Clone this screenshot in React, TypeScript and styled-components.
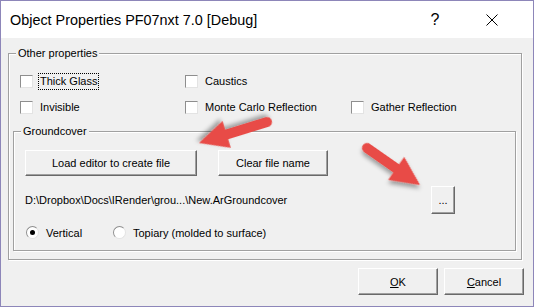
import * as React from "react";
import styled, { createGlobalStyle } from "styled-components";

const GlobalStyle = createGlobalStyle`
  html, body {
    margin: 0;
    padding: 0;
    background: #ffffff;
  }
  body {
    font-family: "Liberation Sans", Arial, sans-serif;
    font-size: 11px;
    color: #000;
  }
`;

const colors = {
  frame: "#8d86b9",
  face: "#f0f0f0",
  edgeDark: "#a0a0a0",
  edgeDarker: "#696969",
  arrow: "#e84c47",
};

const Window = styled.div`
  position: relative;
  width: 534px;
  height: 307px;
  box-sizing: border-box;
  border: 1px solid ${colors.frame};
  background: ${colors.face};
  display: flex;
  flex-direction: column;
`;

const TitleBar = styled.div`
  height: 37px;
  background: #fff;
  display: flex;
  align-items: center;
  padding-left: 9px;
`;

const Title = styled.div`
  font-family: "Liberation Sans", Arial, sans-serif;
  font-size: 14.4px;
  color: #000;
  white-space: nowrap;
`;

const CaptionButtons = styled.div`
  margin-left: auto;
  display: flex;
  align-items: center;
  gap: 27px;
  padding-right: 26px;
`;

const CaptionButton = styled.div`
  width: 30px;
  height: 30px;
  display: flex;
  align-items: center;
  justify-content: center;
  font-family: "Liberation Sans", Arial, sans-serif;
  font-size: 16px;
  color: #000;
`;

const Body = styled.div`
  flex: 1;
  display: flex;
  flex-direction: column;
  padding: 15px 11px 0 7px;
`;

const Group = styled.div<{ $gapTop?: number }>`
  position: relative;
  margin-top: ${(p) => p.$gapTop ?? 0}px;
  border: 1px solid ${colors.edgeDark};
  box-shadow: inset 1px 1px 0 #fff, 1px 1px 0 #fff;
  display: flex;
  flex-direction: column;
`;

const Legend = styled.span`
  position: absolute;
  top: -7px;
  left: 7px;
  padding: 0 2px;
  background: ${colors.face};
  line-height: 13px;
`;

const OuterContent = styled.div`
  padding: 19px 5px 8px 4px;
  display: flex;
  flex-direction: column;
`;

const CheckGrid = styled.div`
  display: grid;
  grid-template-columns: 165px 166px auto;
  row-gap: 10px;
  padding-left: 7px;
`;

const CheckItem = styled.label`
  display: flex;
  align-items: center;
  height: 16px;
  gap: 6px;
`;

const CheckBox = styled.span`
  width: 13px;
  height: 13px;
  box-sizing: border-box;
  background: #fff;
  border: 1px solid;
  border-color: #8e8e8e #e3e3e3 #e3e3e3 #8e8e8e;
`;

const CheckText = styled.span<{ $focused?: boolean }>`
  padding: 1px 1px;
  line-height: 13px;
  outline: ${(p) => (p.$focused ? "1px dotted #000" : "none")};
  outline-offset: 0;
`;

const InnerContent = styled.div`
  padding: 18px 0 11px 11px;
  display: flex;
  flex-direction: column;
`;

const ButtonRow = styled.div`
  display: flex;
  gap: 21px;
`;

const Button = styled.button<{ $w: number; $h?: number }>`
  width: ${(p) => p.$w}px;
  height: ${(p) => p.$h ?? 26}px;
  box-sizing: border-box;
  margin: 0;
  padding: 0;
  font-family: "Liberation Sans", Arial, sans-serif;
  font-size: 11px;
  color: #000;
  background: ${colors.face};
  border: 1px solid;
  border-color: #fff ${colors.edgeDarker} ${colors.edgeDarker} #fff;
  box-shadow: inset -1px -1px 0 ${colors.edgeDark};
`;

const PathRow = styled.div`
  display: flex;
  align-items: center;
  margin-top: 10px;
`;

const PathText = styled.div`
  width: 406px;
  white-space: nowrap;
`;

const RadioRow = styled.div`
  display: flex;
  align-items: center;
  margin-top: 12px;
  padding-left: 1px;
`;

const RadioItem = styled.label`
  display: flex;
  align-items: center;
  gap: 7px;
  width: 87px;
  &:last-child {
    width: auto;
  }
`;

const Radio = styled.span<{ $checked?: boolean }>`
  width: 13px;
  height: 13px;
  box-sizing: border-box;
  border-radius: 50%;
  background: #fff;
  border: 1px solid;
  border-color: #8e8e8e #e3e3e3 #e3e3e3 #8e8e8e;
  display: flex;
  align-items: center;
  justify-content: center;
  &::after {
    content: "";
    width: 5px;
    height: 5px;
    border-radius: 50%;
    background: ${(p) => (p.$checked ? "#000" : "transparent")};
  }
`;

const Footer = styled.div`
  display: flex;
  justify-content: flex-end;
  gap: 6px;
  padding: 8px 0 0 0;
  margin-right: -2px;
`;

const Overlay = styled.svg`
  position: absolute;
  left: 0;
  top: 0;
  pointer-events: none;
`;

const Arrow = ({ x1, y1, x2, y2 }: { x1: number; y1: number; x2: number; y2: number }) => {
  const dx = x2 - x1;
  const dy = y2 - y1;
  const len = Math.sqrt(dx * dx + dy * dy);
  const angle = (Math.atan2(dy, dx) * 180) / Math.PI;
  return (
    <g transform={`translate(${x1} ${y1}) rotate(${angle})`} filter="url(#shadow)">
      <line x1={0} y1={0} x2={len - 26} y2={0} stroke={colors.arrow} strokeWidth={10} strokeLinecap="round" />
      <polygon points={`${len},0 ${len - 29},-14 ${len - 29},14`} fill={colors.arrow} />
    </g>
  );
};

const AccessKey = styled.span`
  text-decoration: underline;
`;

export default function App() {
  return (
    <>
      <GlobalStyle />
      <Window>
        <TitleBar>
          <Title>Object Properties PF07nxt 7.0 [Debug]</Title>
          <CaptionButtons>
            <CaptionButton>?</CaptionButton>
            <CaptionButton>
              <svg width="12" height="12" viewBox="0 0 12 12">
                <path d="M0.5 0.5 L11.5 11.5 M11.5 0.5 L0.5 11.5" stroke="#000" strokeWidth="1" />
              </svg>
            </CaptionButton>
          </CaptionButtons>
        </TitleBar>
        <Body>
          <Group>
            <Legend>Other properties</Legend>
            <OuterContent>
              <CheckGrid>
                <CheckItem>
                  <CheckBox />
                  <CheckText $focused>Thick Glass</CheckText>
                </CheckItem>
                <CheckItem>
                  <CheckBox />
                  <CheckText>Caustics</CheckText>
                </CheckItem>
                <span />
                <CheckItem>
                  <CheckBox />
                  <CheckText>Invisible</CheckText>
                </CheckItem>
                <CheckItem>
                  <CheckBox />
                  <CheckText>Monte Carlo Reflection</CheckText>
                </CheckItem>
                <CheckItem>
                  <CheckBox />
                  <CheckText>Gather Reflection</CheckText>
                </CheckItem>
              </CheckGrid>
              <Group $gapTop={16}>
                <Legend>Groundcover</Legend>
                <InnerContent>
                  <ButtonRow>
                    <Button $w={172}>Load editor to create file</Button>
                    <Button $w={110}>Clear file name</Button>
                  </ButtonRow>
                  <PathRow>
                    <PathText>D:\Dropbox\Docs\IRender\grou...\New.ArGroundcover</PathText>
                    <Button $w={24} $h={28}>...</Button>
                  </PathRow>
                  <RadioRow>
                    <RadioItem>
                      <Radio $checked />
                      <span>Vertical</span>
                    </RadioItem>
                    <RadioItem>
                      <Radio />
                      <span>Topiary (molded to surface)</span>
                    </RadioItem>
                  </RadioRow>
                </InnerContent>
              </Group>
            </OuterContent>
          </Group>
          <Footer>
            <Button $w={80} $h={27}>
              <AccessKey>O</AccessKey>K
            </Button>
            <Button $w={80} $h={27}>
              <AccessKey>C</AccessKey>ancel
            </Button>
          </Footer>
        </Body>
        <Overlay width="534" height="307">
          <defs>
            <filter id="shadow" x="-20%" y="-50%" width="150%" height="220%">
              <feDropShadow dx="2" dy="3" stdDeviation="2" floodColor="#000" floodOpacity="0.35" />
            </filter>
          </defs>
          <Arrow x1={266} y1={121} x2={198} y2={142} />
          <Arrow x1={366} y1={147} x2={419} y2={184} />
        </Overlay>
      </Window>
    </>
  );
}
